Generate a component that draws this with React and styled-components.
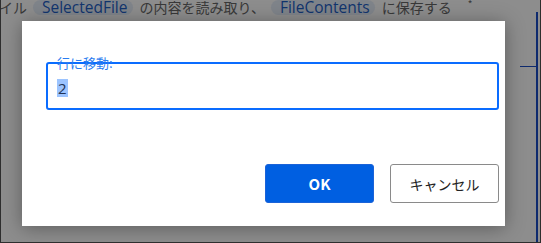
import styled, { createGlobalStyle } from "styled-components";

const GlobalStyle = createGlobalStyle`
  html, body {
    margin: 0;
    padding: 0;
    background: #fff;
  }
  * {
    box-sizing: border-box;
  }
`;

const Screen = styled.div`
  position: relative;
  width: 541px;
  height: 243px;
  overflow: hidden;
  background: #fbfbfb;
  border: 1px solid #2e2e2e;
  border-top: none;
  display: flex;
  font-family: "Noto Sans CJK JP", "Noto Sans", sans-serif;
`;

const Editor = styled.div`
  flex: 1;
  display: flex;
  flex-direction: column;
`;

const ActionLine = styled.div`
  display: flex;
  align-items: center;
  height: 15px;
  margin-left: -2px;
  font-size: 14px;
  line-height: 15px;
  color: #666;
  white-space: nowrap;
`;

const Plain = styled.span`
  flex-shrink: 0;
  margin-right: 6px;
`;

const Token = styled.span`
  flex-shrink: 0;
  margin-right: 7px;
  padding: 0 5px 0 9px;
  border-radius: 8px;
  background: #e3ebf7;
  color: #1f5fc4;
  font-family: "Open Sans", "Noto Sans", sans-serif;
  font-size: 15.5px;
`;

const Star = styled.span`
  margin-left: 10px;
  margin-top: -8px;
  font-size: 10px;
`;

const Rail = styled.div`
  flex: 0 0 18px;
  align-self: stretch;
  margin-right: 2px;
  padding-top: 12px;
  display: flex;
  flex-direction: column;
`;

const Track = styled.div`
  flex: 1;
  border-right: 2px solid #1a4cc4;
  padding-top: 54px;
`;

const Tick = styled.div`
  height: 1px;
  background: #1a4cc4;
`;

const Overlay = styled.div`
  position: absolute;
  inset: 0;
  background: rgba(0, 0, 0, 0.44);
  padding: 21px 0 0 21px;
`;

const Dialog = styled.div`
  width: 483px;
  height: 205px;
  background: #fff;
  box-shadow: 0 2px 18px rgba(0, 0, 0, 0.35);
  padding: 41px 6px 23px 24px;
  display: flex;
  flex-direction: column;
  justify-content: space-between;
`;

const Field = styled.div`
  position: relative;
  height: 48px;
  border: 2px solid #0a6cff;
  border-radius: 3px;
  padding: 11px 0 0 9px;
`;

const Label = styled.span`
  position: absolute;
  top: -8px;
  left: 9px;
  font-size: 13px;
  line-height: 14px;
  color: #2a7cf0;
`;

const Value = styled.span`
  display: inline-block;
  background: #9cc4ff;
  color: #223355;
  font-family: "Open Sans", "Noto Sans", sans-serif;
  font-size: 15px;
  line-height: 18px;
  padding: 0 1px;
`;

const Actions = styled.div`
  display: flex;
  justify-content: flex-end;
  gap: 16px;
`;

const Button = styled.button`
  width: 109px;
  height: 39px;
  border-radius: 3px;
  font-family: "Noto Sans CJK JP", "Noto Sans", sans-serif;
  cursor: pointer;
  border: 1px solid ${(p) => (p.$primary ? "#1b63d8" : "#8a8a8a")};
  background: ${(p) => (p.$primary ? "#005fe1" : "#fff")};
  color: ${(p) => (p.$primary ? "#fff" : "#222")};
  font-weight: ${(p) => (p.$primary ? 700 : 400)};
  font-size: ${(p) => (p.$primary ? "15px" : "14px")};
`;

export default function App() {
  return (
    <>
      <GlobalStyle />
      <Screen>
        <Editor>
          <ActionLine>
            <Plain>イル</Plain>
            <Token>SelectedFile</Token>
            <Plain>の内容を読み取り、</Plain>
            <Token>FileContents</Token>
            <Plain>に保存する</Plain>
            <Star>*</Star>
          </ActionLine>
        </Editor>
        <Rail>
          <Track>
            <Tick />
          </Track>
        </Rail>
        <Overlay>
          <Dialog>
            <Field>
              <Label>行に移動:</Label>
              <Value>2</Value>
            </Field>
            <Actions>
              <Button $primary>OK</Button>
              <Button>キャンセル</Button>
            </Actions>
          </Dialog>
        </Overlay>
      </Screen>
    </>
  );
}
